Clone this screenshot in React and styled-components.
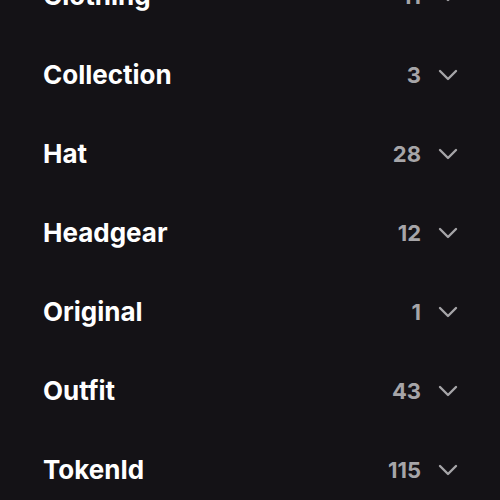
import React from "react";
import styled, { createGlobalStyle } from "styled-components";

const GlobalStyle = createGlobalStyle`
  html, body {
    margin: 0;
    padding: 0;
    background: #141216;
    overflow: hidden;
  }
`;

const traits = [
  { name: "Clothing", count: 11 },
  { name: "Collection", count: 3 },
  { name: "Hat", count: 28 },
  { name: "Headgear", count: 12 },
  { name: "Original", count: 1 },
  { name: "Outfit", count: 43 },
  { name: "TokenId", count: 115 },
];

function Chevron() {
  return (
    <svg width="20" height="12" viewBox="0 0 20 12" fill="none">
      <path
        d="M2 2 L10 10 L18 2"
        stroke="#a6a5a8"
        strokeWidth="2.4"
        strokeLinecap="round"
        strokeLinejoin="round"
      />
    </svg>
  );
}

function App() {
  return (
    <Container>
      <GlobalStyle />
      <List>
        {traits.map((t) => (
          <Row key={t.name}>
            <Label>{t.name}</Label>
            <Right>
              <Count>{t.count}</Count>
              <Chevron />
            </Right>
          </Row>
        ))}
      </List>
    </Container>
  );
}

const Container = styled.div`
  width: 500px;
  height: 500px;
  background: #141216;
  font-family: Inter, "Noto Sans", sans-serif;
  overflow: hidden;
`;

const List = styled.div`
  margin-top: -44px;
  padding: 0 42px 0 43px;
  display: flex;
  flex-direction: column;
`;

const Row = styled.div`
  height: 79px;
  display: flex;
  align-items: center;
  justify-content: space-between;
`;

const Label = styled.span`
  color: #ffffff;
  font-size: 26px;
  font-weight: 700;
`;

const Right = styled.div`
  display: flex;
  align-items: center;
  gap: 17px;
`;

const Count = styled.span`
  color: #a6a5a8;
  font-size: 22px;
  font-weight: 700;
`;

export default App;
